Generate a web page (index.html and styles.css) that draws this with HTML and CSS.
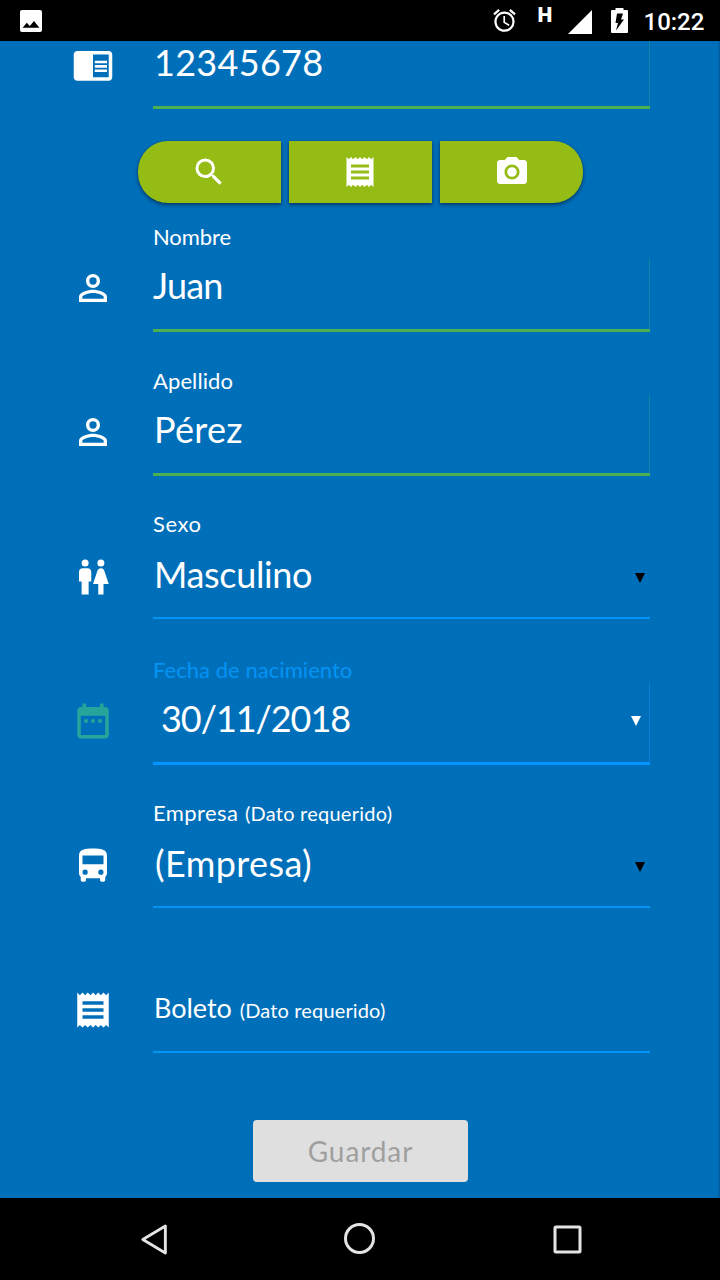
FILE: index.html
```html
<!DOCTYPE html>
<html lang="es">
<head>
<meta charset="utf-8">
<title>Registro</title>
<link rel="stylesheet" href="styles.css">
</head>
<body>
<svg class="defs" width="0" height="0">
  <symbol id="receipt" viewBox="0 0 24 24"><path d="M18 17H6v-2h12v2zm0-4H6v-2h12v2zm0-4H6V7h12v2zM3 22l1.5-1.5L6 22l1.5-1.5L9 22l1.5-1.5L12 22l1.5-1.5L15 22l1.5-1.5L18 22l1.5-1.5L21 22V2l-1.5 1.5L18 2l-1.5 1.5L15 2l-1.5 1.5L12 2l-1.5 1.5L9 2 7.500 3.500 6 2 4.500 3.500 3 2v20z"/></symbol>
  <symbol id="person" viewBox="0 0 24 24"><path d="M12 5.900a2.100 2.100 0 1 1 0 4.200 2.100 2.100 0 0 1 0-4.200m0 9c2.970 0 6.100 1.460 6.100 2.100v1.100H5.900V17c0-.64 3.130-2.100 6.100-2.100M12 4C9.790 4 8 5.790 8 8s1.790 4 4 4 4-1.790 4-4-1.790-4-4-4zm0 9c-2.670 0-8 1.340-8 4v3h16v-3c0-2.660-5.330-4-8-4z"/></symbol>
</svg>
<div class="phone">
  <header class="status">
    <svg class="st-image" viewBox="0 0 22 22"><path fill-rule="evenodd" d="M2 0h18a2 2 0 0 1 2 2v18a2 2 0 0 1-2 2H2a2 2 0 0 1-2-2V2a2 2 0 0 1 2-2zm.6 17.800h16.800L14 11l-4.200 5-3-3.300z"/></svg>
    <svg class="st-alarm" viewBox="0 0 24 24"><path d="M22 5.720l-4.600-3.860-1.290 1.530 4.600 3.860L22 5.720zM7.880 3.390L6.600 1.860 2 5.710l1.290 1.530 4.590-3.850zM12.500 8H11v6l4.750 2.850.75-1.230-4-2.370V8zM12 4c-4.970 0-9 4.030-9 9s4.020 9 9 9a9 9 0 0 0 0-18zm0 16c-3.870 0-7-3.130-7-7s3.130-7 7-7 7 3.130 7 7-3.130 7-7 7z"/></svg>
    <span class="st-net">H</span>
    <svg class="st-signal" viewBox="0 0 24 24"><path d="M24 0v24H0z"/></svg>
    <svg class="st-battery" viewBox="0 0 17 25"><path fill-rule="evenodd" d="M1 2h3.500V0h8v2H16a1 1 0 0 1 1 1v21a1 1 0 0 1-1 1H1a1 1 0 0 1-1-1V3a1 1 0 0 1 1-1zM6 5.500L4.500 15H7L5 22.500 13 11.500H10L12 5.500z"/></svg>
    <time class="st-time">10:22</time>
  </header>

  <main class="form">
    <div class="row row-first">
      <svg class="icon" viewBox="0 0 24 24"><path d="M13 12h7v1.500h-7zm0-2.500h7V11h-7zm0 5h7V16h-7zM21 4H3c-1.100 0-2 .9-2 2v13c0 1.100.9 2 2 2h18c1.100 0 2-.9 2-2V6c0-1.100-.9-2-2-2zm0 15h-9V6h9v13z"/></svg>
      <div class="field valid"><div class="value"><span class="w-doc">12345678</span></div></div>
    </div>

    <div class="actions">
      <button class="act act-left"><svg viewBox="0 0 24 24"><path d="M15.500 14h-.79l-.28-.27A6.471 6.471 0 0 0 16 9.500 6.500 6.500 0 1 0 9.500 16c1.610 0 3.090-.59 4.230-1.570l.27.28v.79l5 4.990L20.490 19l-4.990-5zm-6 0C7.010 14 5 11.990 5 9.500S7.010 5 9.500 5 14 7.010 14 9.500 11.990 14 9.500 14z"/></svg></button>
      <button class="act"><svg><use href="#receipt"/></svg></button>
      <button class="act act-right"><svg viewBox="0 0 24 24"><circle cx="12" cy="12" r="3.200"/><path d="M9 2L7.170 4H4c-1.100 0-2 .9-2 2v12c0 1.100.9 2 2 2h16c1.100 0 2-.9 2-2V6c0-1.100-.9-2-2-2h-3.170L15 2H9zm3 15c-2.760 0-5-2.240-5-5s2.240-5 5-5 5 2.240 5 5-2.240 5-5 5z"/></svg></button>
    </div>

    <div class="row row-name">
      <svg class="icon"><use href="#person"/></svg>
      <div class="field valid short"><div class="label"><span class="w-nombre">Nombre</span></div><div class="value"><span class="w-juan">Juan</span></div></div>
    </div>
    <div class="row">
      <svg class="icon"><use href="#person"/></svg>
      <div class="field valid"><div class="label"><span class="w-apellido">Apellido</span></div><div class="value"><span class="w-perez">Pérez</span></div></div>
    </div>
    <div class="row row-select">
      <svg class="icon icon-up" viewBox="0 0 24 24"><path d="M5.500 22v-7.500H4V9c0-1.100.9-2 2-2h3c1.100 0 2 .9 2 2v5.500H9.500V22h-4zM18 22v-6h3l-2.540-7.630A2.010 2.010 0 0 0 16.560 7h-.12c-.86 0-1.630.55-1.900 1.370L12 16h3v6h3zM7.500 6a2 2 0 1 0 0-4 2 2 0 0 0 0 4zm9 0a2 2 0 1 0 0-4 2 2 0 0 0 0 4z"/></svg>
      <div class="field select"><div class="label"><span class="w-sexo">Sexo</span></div><div class="value"><span class="w-masc">Masculino</span><i class="caret"></i></div></div>
    </div>
    <div class="row row-date">
      <svg class="icon" viewBox="0 0 24 24"><path d="M9 11H7v2h2v-2zm4 0h-2v2h2v-2zm4 0h-2v2h2v-2zm2-7h-1V2h-2v2H8V2H6v2H5c-1.110 0-1.990.9-1.990 2L3 20c0 1.100.89 2 2 2h14c1.100 0 2-.9 2-2V6c0-1.100-.9-2-2-2zm0 16H5V9h14v11z"/></svg>
      <div class="field active"><div class="label"><span class="w-fecha">Fecha de nacimiento</span></div><div class="value"><span class="w-date">30/11/2018</span><i class="caret caret-light"></i></div></div>
    </div>
    <div class="row row-select">
      <svg class="icon icon-up" viewBox="0 0 24 24"><path d="M4 16c0 .88.39 1.670 1 2.220V20c0 .55.45 1 1 1h1c.55 0 1-.45 1-1v-1h8v1c0 .55.45 1 1 1h1c.55 0 1-.45 1-1v-1.780c.61-.55 1-1.340 1-2.220V6c0-3.500-3.580-4-8-4s-8 .5-8 4v10zm3.500 1a1.500 1.500 0 1 1 0-3 1.500 1.500 0 0 1 0 3zm9 0a1.500 1.500 0 1 1 0-3 1.500 1.500 0 0 1 0 3zm1.500-6H6V6h12v5z"/></svg>
      <div class="field select"><div class="label"><span class="w-emp">Empresa</span> <small>(Dato requerido)</small></div><div class="value"><span class="w-empresa">(Empresa)</span><i class="caret"></i></div></div>
    </div>
    <div class="row row-ticket">
      <svg class="icon"><use href="#receipt"/></svg>
      <div class="field select"><div class="value placeholder"><span class="w-boleto">Boleto</span> <small>(Dato requerido)</small></div></div>
    </div>

    <button class="save" disabled>Guardar</button>
  </main>

  <nav class="navbar">
    <svg viewBox="0 0 36 36"><path d="M28.500 5L5 18.500 28.500 32z" transform="translate(3 0) scale(.96 1)"/></svg>
    <svg viewBox="0 0 36 36"><circle cx="17.500" cy="17.500" r="14"/></svg>
    <svg viewBox="0 0 36 36"><rect x="6" y="6" width="25" height="25" rx="1"/></svg>
  </nav>
</div>
</body>
</html>
```
FILE: styles.css
```css
* { box-sizing: border-box; }
body { margin: 0; background: #000; }
.defs { display: block; }
.phone {
  width: 720px;
  height: 1280px;
  display: flex;
  flex-direction: column;
  overflow: hidden;
  font-family: Lato, "Open Sans", sans-serif;
  color: #fff;
}

/* Status bar */
.status { height: 41px; flex: none; display: flex; align-items: flex-start; padding: 0 14px 0 20px; background: #000; fill: #fff; }
.st-image { width: 22px; height: 22px; margin-top: 10px; }
.st-alarm { width: 27px; height: 27px; margin: 7px 0 0 448.500px; }
.st-net { margin: 3px 0 0 20px; width: 15px; font: 900 21px/24px Roboto, sans-serif; }
.st-signal { width: 24px; height: 24px; margin: 10px 0 0 15px; }
.st-battery { width: 17px; height: 25px; margin: 8px 0 0 19px; }
.st-time { margin: 8px 0 0 16px; font: 500 24px/29px Roboto, sans-serif; white-space: nowrap; }

/* Form */
.form { height: 1157px; flex: none; background: #006fba; box-shadow: inset -2px 0 2px -1px rgba(0, 40, 90, .35); }
.row { display: flex; height: 112px; margin: 32px 70px 0 71px; }
.row-first { height: 68px; margin-top: 0; }
.row-name { margin-top: 17px; }
.row-select { margin-top: 31px; }
.row-date { margin-top: 34px; }
.row-ticket { margin-top: 32px; height: 113px; }
.icon { width: 42px; height: 42px; flex: none; align-self: flex-end; margin: 0 39.500px 23px .5px; fill: #fff; }
.icon-up { margin-bottom: 21px; }
.row-ticket .icon { margin-bottom: 22px; }
.row-date .icon { fill: #26a69a; }

.field { flex: 1; display: flex; flex-direction: column; justify-content: flex-end; background: linear-gradient(#1482a0, #1482a0) right bottom / 1px 82px no-repeat; }
.field.short { background-size: 1px 74px; }
.field.select { background: none; }
.field.active { background-image: linear-gradient(#087fd5, #087fd5); }
.label { height: 36px; font-size: 22px; line-height: 34px; white-space: nowrap; }
.value { display: flex; align-items: flex-end; justify-content: space-between; height: 76px; padding: 0 5px 23px 1px; font-size: 36px; line-height: 42px; border-bottom: 3px solid #4caf50; }
.row-first .value { height: 68px; }
.select .value { padding-bottom: 22px; border-bottom: 2px solid #0394f5; }
.active .value { padding-left: 8px; border-bottom-color: #0394ff; }
.active .label { color: #0394f5; }
.select .placeholder { justify-content: flex-start; align-items: baseline; gap: 8px; padding-top: 10px; padding-bottom: 0; font-size: 27px; }
small { font-size: 20px; letter-spacing: .15px; }
.caret { width: 10px; height: 10px; margin-bottom: 12px; background: #000; clip-path: polygon(0 0, 100% 0, 50% 100%); }
.caret-light { background: #fff; margin: 0 4px 13px 0; }

/* Tracking per text */
.w-doc { letter-spacing: .3px; }
.w-nombre { letter-spacing: -.1px; }
.w-juan { letter-spacing: -.8px; margin-left: -1px; }
.w-apellido { letter-spacing: .1px; }
.w-perez { letter-spacing: .3px; }
.w-sexo { letter-spacing: .6px; }
.w-masc { letter-spacing: -.35px; }
.w-fecha { letter-spacing: .05px; }
.w-date { letter-spacing: -1.050px; }
.w-emp { letter-spacing: .4px; }
.label small { letter-spacing: .25px; margin-left: 1px; }
.w-empresa { letter-spacing: .4px; margin-left: 1px; }
.w-boleto { letter-spacing: -.05px; }

/* Button group */
.actions { display: flex; gap: 8px; height: 62px; margin: 32px 136.500px 0 137.500px; }
.act { flex: 1; display: grid; place-items: center; padding: 0 0 1px; border: 0; background: #95bc14; box-shadow: 0 2px 4px rgba(0, 20, 50, .45), 0 1px 3px rgba(0, 20, 50, .3); }
.act svg { width: 36px; height: 36px; fill: #fff; }
.act-left { border-radius: 30px 0 0 30px; }
.act-right { border-radius: 0 30px 30px 0; }

.save { display: block; width: 215px; height: 62px; margin: 67px 0 0 253px; padding: 0; border: 0; border-radius: 4px; background: #dfdfdf; color: #9f9f9f; font: 28px/60px Lato, sans-serif; letter-spacing: .9px; }

/* Navigation bar */
.navbar { height: 82px; flex: none; display: flex; align-items: center; justify-content: space-between; padding: 0 135px; background: #000; }
.navbar svg { width: 36px; height: 36px; fill: none; stroke: #e4e4e4; stroke-width: 3; stroke-linejoin: round; }
```
